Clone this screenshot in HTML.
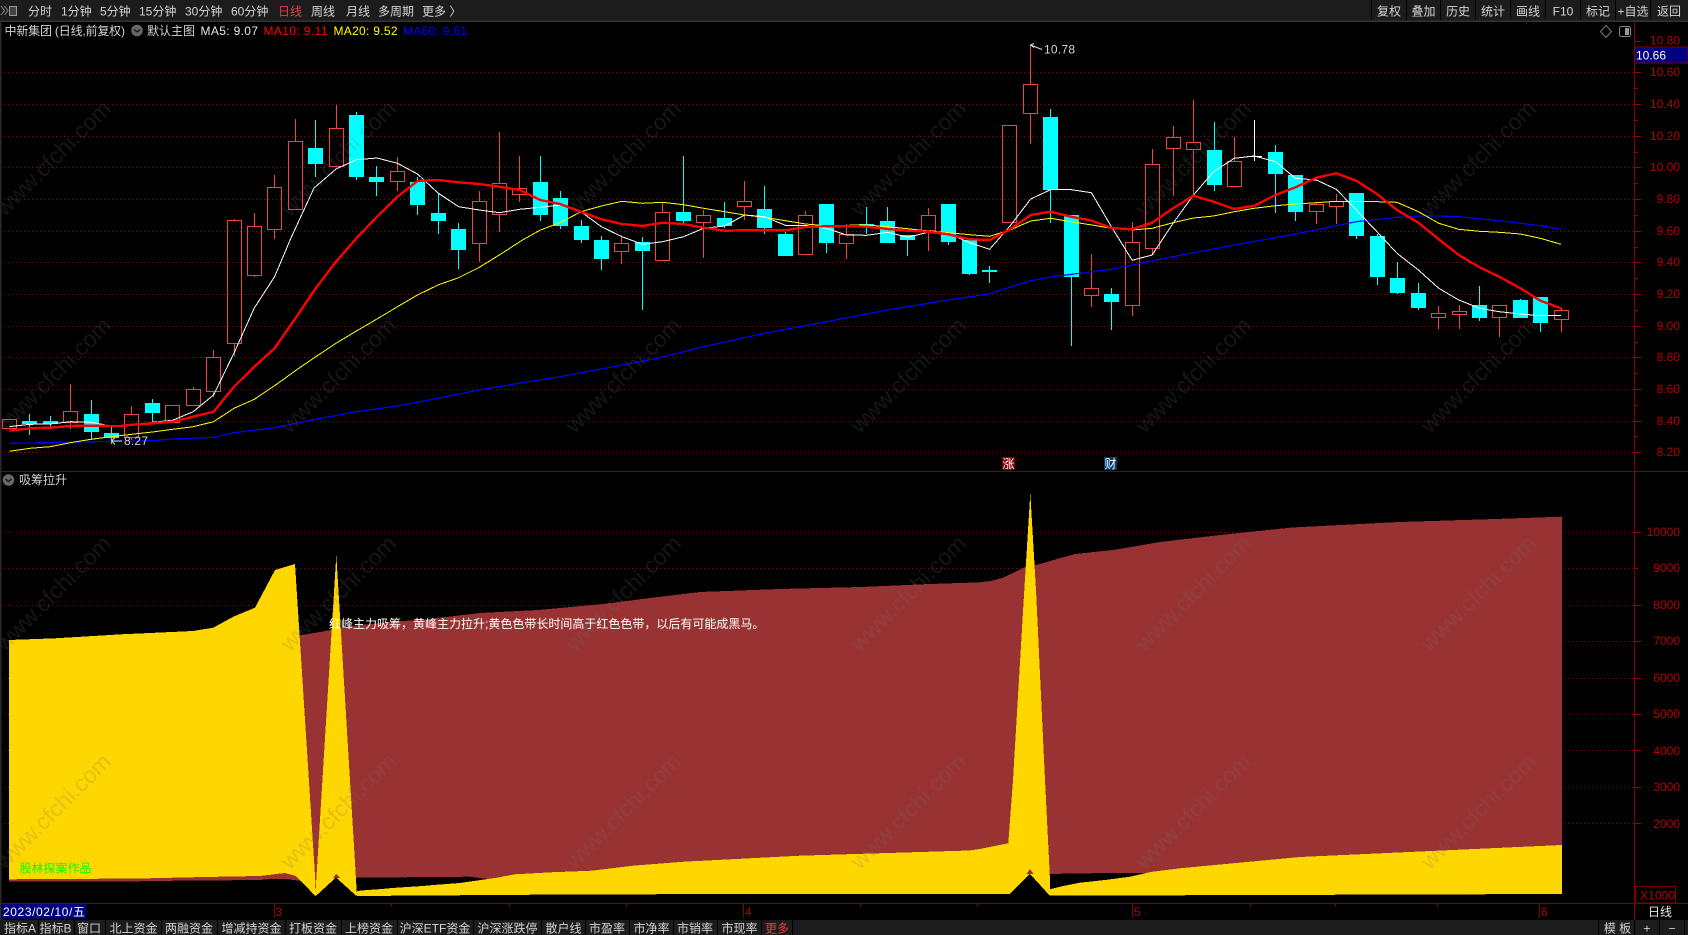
<!DOCTYPE html>
<html lang="zh"><head><meta charset="utf-8"><title>中新集团</title>
<style>
html,body{margin:0;padding:0;background:#000;width:1688px;height:935px;overflow:hidden}
svg{display:block}
text{font-family:"Liberation Sans","Noto Sans CJK SC",sans-serif;font-size:12px;fill:#d4d4d4}
.ax text{fill:#b40000;text-anchor:end}
.tb text{text-anchor:middle}
.ln{fill:none;stroke-linejoin:round;shape-rendering:crispEdges}
.wm text{font-size:23px;fill:rgba(110,110,110,.2);text-anchor:middle}
polygon{shape-rendering:crispEdges}
</style></head><body>
<svg xmlns="http://www.w3.org/2000/svg" width="1688" height="935" viewBox="0 0 1688 935">
<rect width="1688" height="935" fill="#000"/>
<!-- grid -->
<path shape-rendering="crispEdges" stroke="#a00000" stroke-dasharray="1 3" fill="none" d="M4 72.5H1634M4 104.5H1634M4 136.5H1634M4 167.5H1634M4 199.5H1634M4 231.5H1634M4 262.5H1634M4 294.5H1634M4 326.5H1634M4 357.5H1634M4 389.5H1634M4 421.5H1634M4 452.5H1634M4 532.5H1634M4 568.5H1634M4 605.5H1634M4 641.5H1634M4 678.5H1634M4 714.5H1634M4 750.5H1634M4 787.5H1634M4 823.5H1634"/>
<!-- red wicks/bodies -->
<g shape-rendering="crispEdges" stroke="#f04444" fill="none">
<path d="M70.5 384V411M70.5 422V429M131.5 406V414M131.5 437V440M193.5 387V389M213.5 350V357M213.5 391V397M234.5 219V220M234.5 343V356M254.5 213V226M254.5 275V277M274.5 175V187M274.5 229V239M295.5 119V141M336.5 105V128M397.5 157V171M397.5 181V191M479.5 191V201M479.5 243V262M499.5 132V183M499.5 214V232M519.5 156V188M519.5 194V202M621.5 235V243M621.5 251V264M662.5 202V212M703.5 210V215M703.5 222V258M744.5 181V201M744.5 206V220M805.5 211V215M846.5 224V234M846.5 243V259M928.5 208V215M928.5 230V251M1030.5 45V84M1030.5 113V144M1091.5 254V288M1091.5 295V307M1132.5 222V242M1132.5 305V316M1152.5 149V164M1152.5 248V255M1173.5 126V137M1173.5 148V196M1193.5 100V142M1193.5 149V197M1234.5 137V161M1316.5 203V204M1316.5 211V224M1336.5 194V201M1336.5 206V224M1438.5 306V313M1438.5 317V329M1459.5 305V311M1459.5 314V329M1499.5 317V337M1561.5 308V310M1561.5 319V332"/>
<rect x="2.5" y="419.5" width="14" height="9"/><rect x="63.5" y="411.5" width="14" height="11"/><rect x="124.5" y="414.5" width="14" height="23"/><rect x="165.5" y="405.5" width="14" height="17"/><rect x="186.5" y="389.5" width="14" height="16"/><rect x="206.5" y="357.5" width="14" height="34"/><rect x="227.5" y="220.5" width="14" height="123"/><rect x="247.5" y="226.5" width="14" height="49"/><rect x="267.5" y="187.5" width="14" height="42"/><rect x="288.5" y="141.5" width="14" height="68"/><rect x="329.5" y="128.5" width="14" height="38"/><rect x="390.5" y="171.5" width="14" height="10"/><rect x="472.5" y="201.5" width="14" height="42"/><rect x="492.5" y="183.5" width="14" height="31"/><rect x="512.5" y="188.5" width="14" height="6"/><rect x="614.5" y="243.5" width="14" height="8"/><rect x="655.5" y="212.5" width="14" height="48"/><rect x="696.5" y="215.5" width="14" height="7"/><rect x="737.5" y="201.5" width="14" height="5"/><rect x="798.5" y="215.5" width="14" height="39"/><rect x="839.5" y="234.5" width="14" height="9"/><rect x="921.5" y="215.5" width="14" height="15"/><rect x="1002.5" y="125.5" width="14" height="97"/><rect x="1023.5" y="84.5" width="14" height="29"/><rect x="1084.5" y="288.5" width="14" height="7"/><rect x="1125.5" y="242.5" width="14" height="63"/><rect x="1145.5" y="164.5" width="14" height="84"/><rect x="1166.5" y="137.5" width="14" height="11"/><rect x="1186.5" y="142.5" width="14" height="7"/><rect x="1227.5" y="161.5" width="14" height="25"/><rect x="1309.5" y="204.5" width="14" height="7"/><rect x="1329.5" y="201.5" width="14" height="5"/><rect x="1431.5" y="313.5" width="14" height="4"/><rect x="1452.5" y="311.5" width="14" height="3"/><rect x="1492.5" y="305.5" width="14" height="12"/><rect x="1554.5" y="310.5" width="14" height="9"/>
</g>
<!-- cyan -->
<g shape-rendering="crispEdges">
<path stroke="#00ffff" fill="none" d="M29.5 414V435M50.5 416V427M91.5 400V440M111.5 427V444M152.5 399V422M315.5 120V177M356.5 112V180M376.5 166V196M417.5 177V215M438.5 194V234M458.5 223V269M540.5 156V221M560.5 191V229M581.5 220V243M601.5 236V270M642.5 237V310M683.5 156V223M724.5 202V228M764.5 186V234M785.5 232V256M826.5 204V253M866.5 207V234M887.5 207V243M907.5 235V256M948.5 204V245M969.5 240V275M989.5 266V283M1050.5 109V223M1071.5 215V346M1111.5 288V330M1214.5 122V191M1275.5 145V213M1295.5 175V221M1356.5 193V239M1377.5 234V285M1397.5 262V294M1418.5 283V310M1479.5 286V321M1520.5 299V318M1540.5 297V332"/>
<g fill="#00ffff"><rect x="22" y="421" width="15" height="3"/><rect x="43" y="421" width="15" height="3"/><rect x="84" y="414" width="15" height="18"/><rect x="104" y="433" width="15" height="5"/><rect x="145" y="403" width="15" height="10"/><rect x="308" y="148" width="15" height="16"/><rect x="349" y="115" width="15" height="62"/><rect x="369" y="177" width="15" height="5"/><rect x="410" y="182" width="15" height="23"/><rect x="431" y="213" width="15" height="8"/><rect x="451" y="229" width="15" height="21"/><rect x="533" y="182" width="15" height="33"/><rect x="553" y="198" width="15" height="28"/><rect x="574" y="226" width="15" height="14"/><rect x="594" y="240" width="15" height="19"/><rect x="635" y="242" width="15" height="9"/><rect x="676" y="212" width="15" height="9"/><rect x="717" y="218" width="15" height="8"/><rect x="757" y="209" width="15" height="19"/><rect x="778" y="234" width="15" height="22"/><rect x="819" y="204" width="15" height="39"/><rect x="859" y="224" width="15" height="2"/><rect x="880" y="221" width="15" height="22"/><rect x="900" y="235" width="15" height="5"/><rect x="941" y="204" width="15" height="38"/><rect x="962" y="240" width="15" height="34"/><rect x="982" y="270" width="15" height="2"/><rect x="1043" y="117" width="15" height="73"/><rect x="1064" y="215" width="15" height="62"/><rect x="1104" y="294" width="15" height="8"/><rect x="1207" y="150" width="15" height="35"/><rect x="1268" y="152" width="15" height="22"/><rect x="1288" y="175" width="15" height="37"/><rect x="1349" y="193" width="15" height="43"/><rect x="1370" y="236" width="15" height="41"/><rect x="1390" y="278" width="15" height="15"/><rect x="1411" y="293" width="15" height="15"/><rect x="1472" y="305" width="15" height="13"/><rect x="1513" y="300" width="15" height="18"/><rect x="1533" y="297" width="15" height="26"/></g>
<path stroke="#fff" fill="none" d="M1254.5 120V161M1247 156.5H1262"/>
</g>
<!-- MA lines -->
<polyline class="ln" stroke="#0000ff" stroke-width="1.2" points="9.3,443.3 70.4,442.3 111.4,441.3 152.5,440.7 172.5,439 193.2,438.3 213.6,437.3 234,432.7 274.6,427.7 315.7,419.3 356.4,411.7 397.5,406 438,398.3 479.3,390 522.5,382.7 560,376.7 652.9,359.3 703.6,346.7 764.6,333.3 826.4,321.7 887.5,310 948.6,300 989.6,293.7 1030.7,280.7 1050.6,277 1111.4,269.3 1173,256.7 1234.3,245 1295.5,234 1356.3,221.7 1397,217.3 1428.6,215.7 1458.8,216.7 1499.2,220.7 1540.4,225.7 1561,229.3"/>
<polyline class="ln" stroke="#ffff00" stroke-width="1" points="9.3,451.3 30,448.3 50,446.7 70.4,442.7 91,439.3 111.4,436.7 131.8,434.3 152.5,432 172.5,429.3 193.2,426.7 213.6,421.7 234,408.3 254.3,399.3 274.6,385.7 295.4,370.7 315.7,356.7 336,343.3 356.4,331 377,319 397.5,306.7 417.5,295 438,285 458.6,277.7 479.3,267.3 499.3,255 522.5,240 540.4,230 560,222.7 581,211.7 601.4,206 622,201.3 642.5,203.3 662.5,202.3 683.6,204.7 703.6,208.3 724.6,211.7 744.6,215 764.6,217.3 785.4,220.7 805.4,224 826.4,225.7 846.4,225.3 866.8,225 887.5,226.7 907.5,228.7 928,231 948.6,232.7 969.6,234.7 989.6,236.3 1010,230 1030.7,221 1050.7,218.3 1070.7,221.7 1092,225 1111.4,228.3 1132.2,230 1152.2,228.3 1173,222.7 1193.5,218 1213.5,216 1234.3,211.7 1254.3,208.3 1275.5,205.7 1295.5,204 1316.3,202.7 1336.3,201.3 1356.3,201.3 1377,201.7 1397,202.3 1418.4,211.7 1438.8,223.3 1458.8,229.3 1479.6,231.3 1499.2,232.3 1520.4,234 1540.4,238.3 1561,244.3"/>
<polyline class="ln" stroke="#ffffff" stroke-width="1" points="9.3,426.7 30,424.3 50,424 70.4,421.7 91,422.3 111.4,426 131.8,425.3 152.5,422.3 172.5,420.3 193.2,411.7 213.6,395 234,353 254.3,308 274.6,276.7 291,238 314,188 336,169 356.4,159.7 377,158 397.5,163.3 417.5,174 438,193 458.6,206.7 479.3,210 499.3,212.7 519.6,209.3 540.4,207.3 560.7,205 581,211.7 601.4,226.7 622,236.7 642.5,244.3 662.5,241.7 683.6,236.7 703.6,228.3 724.6,226 744.6,215 764.6,216.7 785.4,225.3 805.4,225.3 826.4,228.3 846.4,235 866.8,235.3 887.5,232.3 907.5,237.3 928,232.3 948.6,233.3 969.6,242.7 989.6,249.3 1010,226 1030.7,199 1050.6,189.7 1071.4,189.7 1091.4,192.7 1111.4,226.7 1132.2,260.3 1152.2,255 1173,223.3 1193.5,195 1213.5,171.7 1234.3,158.3 1254.3,156 1275.5,161.7 1295.5,178.3 1316.3,180 1336.3,189.3 1356.3,210 1377,231.7 1397,253.3 1418.4,270 1438.8,288.3 1458.8,300 1479.6,308.3 1499.2,311.7 1520.4,314 1540.4,315.7 1561,315.7"/>
<polyline class="ln" stroke="#ff0000" stroke-width="2.4" points="9.3,430.7 30,428.3 50,427.7 70.4,426 91,425.7 111.4,426 122,426 131.8,424.7 152.5,423.3 172.5,421.7 193.2,416.7 213.6,411.7 234,386.7 254.3,366.7 274.6,348.3 295.4,318.3 315.7,288.3 336,261.7 356.4,238.3 377,216.7 397.5,196.7 417.5,181 438,180 458.6,182.3 479.3,184 499.3,186.7 519.6,190 540.4,200 560,204 581,211.7 601.4,219.3 622,224 642.5,226 662.5,222.7 683.6,224 703.6,227.7 724.6,230.7 744.6,230.3 764.6,230.3 785.4,230.3 805.4,227 826.4,226.3 846.4,226 866.8,226.7 887.5,229 907.5,230.7 928,231.7 948.6,234.3 969.6,239.3 989.6,240 1010,229.3 1030.7,215 1050.7,211.7 1070.7,216.7 1092,220.7 1111.4,228 1132.2,229.3 1152.2,222.7 1173,208.3 1193.5,195.7 1213.5,201.7 1234.3,209 1254.3,205.7 1275.5,195 1295.5,187.3 1316.3,177.7 1336.3,173.3 1356.3,180.7 1377,194 1397,210 1418.4,222.7 1438.8,239.3 1458.8,255 1479.6,267.3 1499.2,276.7 1520.4,288.3 1540.4,300.7 1561,308.3"/>
<!-- lower panel -->
<polygon fill="#993333" points="296,636 320,632 352,626 390,622 430,619 480,613 538,610 603,604 650,598 700,592 780,589 861,587 930,584 960,583 979,582.3 991,581 1003,577.7 1015,572 1023,568 1040,564 1057,559 1075,554 1097,551.7 1115,549.7 1135,546.3 1160,542 1220,535 1292,527.5 1399,522 1480,519.5 1562,516.7 1562,850 1153,873 1081,873.3 1050,874 1030,870 1000,880 497,880 469,876.7 357,877.7 315.3,884"/>
<polygon fill="#993333" points="9,879 285,871 297,871 302,881 285,879 270,879 260,880 204,880.5 141,881 141,881.7 9,881.7"/>
<g fill="#ffd700">
<polygon points="9,640 55,638.3 121.7,634.3 193,631 213.3,627.7 233.3,616.7 255,607.7 275,570 295,564 315.3,880 315.3,896 296,876 285,873 260,876 204,877 140,878.5 9,879.3"/>
<polygon points="336.3,555 315.3,895.7 357,895.7"/>
<polygon points="357,891 367,890 382,889 392,888 407,887 423,886 433,885 443,884.3 460,883 497,877.7 515,874.3 551,872.3 592,870.7 633,865.7 684,861.7 800,855.7 969,850.5 980,849 1008.3,843.3 1010,894 592,894.3 357,896"/>
<polygon points="1030.3,493 1024.3,590 1013,780 1008.3,843.3 1008,894 1050,896 1050,880 1045,780 1036,590"/>
<polygon points="1050,889.3 1060,886.7 1080,882.7 1105,880 1130,876.7 1145,873.3 1153,871.7 1180,868.3 1300,857 1562,845 1562,894 1050,895.7"/>
</g>
<polygon fill="#000" points="315.3,896.5 336,877.5 357,896.5"/>
<polygon fill="#993333" points="333,878 336,874 340,878"/>
<polygon fill="#000" points="1009,894.5 1030,874 1051,897 1009,897"/>
<polygon fill="#993333" points="1026.5,874 1030,869 1033.5,874"/>
<!-- watermark -->
<g class="wm">
<text x="53" y="166" transform="rotate(-45 53 158)">www.cfchi.com</text><text x="338" y="166" transform="rotate(-45 338 158)">www.cfchi.com</text><text x="623" y="166" transform="rotate(-45 623 158)">www.cfchi.com</text><text x="908" y="166" transform="rotate(-45 908 158)">www.cfchi.com</text><text x="1193" y="166" transform="rotate(-45 1193 158)">www.cfchi.com</text><text x="1478" y="166" transform="rotate(-45 1478 158)">www.cfchi.com</text>
<text x="53" y="383" transform="rotate(-45 53 375)">www.cfchi.com</text><text x="338" y="383" transform="rotate(-45 338 375)">www.cfchi.com</text><text x="623" y="383" transform="rotate(-45 623 375)">www.cfchi.com</text><text x="908" y="383" transform="rotate(-45 908 375)">www.cfchi.com</text><text x="1193" y="383" transform="rotate(-45 1193 375)">www.cfchi.com</text><text x="1478" y="383" transform="rotate(-45 1478 375)">www.cfchi.com</text>
<text x="53" y="601" transform="rotate(-45 53 593)">www.cfchi.com</text><text x="338" y="601" transform="rotate(-45 338 593)">www.cfchi.com</text><text x="623" y="601" transform="rotate(-45 623 593)">www.cfchi.com</text><text x="908" y="601" transform="rotate(-45 908 593)">www.cfchi.com</text><text x="1193" y="601" transform="rotate(-45 1193 593)">www.cfchi.com</text><text x="1478" y="601" transform="rotate(-45 1478 593)">www.cfchi.com</text>
<text x="53" y="819" transform="rotate(-45 53 811)">www.cfchi.com</text><text x="338" y="819" transform="rotate(-45 338 811)">www.cfchi.com</text><text x="623" y="819" transform="rotate(-45 623 811)">www.cfchi.com</text><text x="908" y="819" transform="rotate(-45 908 811)">www.cfchi.com</text><text x="1193" y="819" transform="rotate(-45 1193 811)">www.cfchi.com</text><text x="1478" y="819" transform="rotate(-45 1478 811)">www.cfchi.com</text>
</g>
<!-- chart annotations -->
<text x="329" y="628" style="fill:#fff">红峰主力吸筹，黄峰主力拉升;黄色色带长时间高于红色色带，以后有可能成黑马。</text>
<text x="19.5" y="872.5" style="fill:#00ff00">股林探案作品</text>
<text x="1044" y="53.5" textLength="31">10.78</text>
<path fill="none" stroke="#ddd" d="M1042 49.5L1030.5 45M1034 43.5L1030.5 45L1034 47.5"/>
<text x="124" y="445" textLength="24">8.27</text>
<path fill="none" stroke="#ddd" d="M122 441H111.5M115 437.5L111.5 441L115 444.5"/>
<rect x="1002" y="457" width="13" height="13" fill="#800000"/><text x="1002.5" y="468" style="fill:#fff">涨</text>
<rect x="1104" y="457" width="13" height="13" fill="#003a6e"/><text x="1104.5" y="468" style="fill:#fff">财</text>
<!-- dividers & axis -->
<g shape-rendering="crispEdges">
<rect x="0" y="471" width="1688" height="1" fill="#800000"/>
<rect x="0" y="903" width="1688" height="1" fill="#800000"/>
<rect x="1634" y="22" width="1" height="898" fill="#800000"/>
<rect x="0" y="22" width="1.5" height="898" fill="#2a2a2a"/>
<path stroke="#a00000" d="M1635 41.5h6M1635 72.5h6M1635 88.5h3M1635 104.5h6M1635 120.5h3M1635 136.5h6M1635 152.5h3M1635 167.5h6M1635 183.5h3M1635 199.5h6M1635 215.5h3M1635 231.5h6M1635 247.5h3M1635 262.5h6M1635 278.5h3M1635 294.5h6M1635 310.5h3M1635 326.5h6M1635 342.5h3M1635 357.5h6M1635 373.5h3M1635 389.5h6M1635 405.5h3M1635 421.5h6M1635 436.5h3M1635 452.5h6M1635 532.5h6M1635 568.5h3M1635 605.5h6M1635 641.5h6M1635 678.5h6M1635 714.5h6M1635 750.5h6M1635 787.5h6M1635 823.5h6"/>
<path stroke="#800000" d="M274.5 904V918M743.5 904V918M1132.5 904V918M1539.5 904V918M391.5 904v3M509.5 904v3M626.5 904v3M860.5 904v3M977.5 904v3M1250.5 904v3M1335.5 904v3M1437.5 904v3"/>
</g>
<g class="ax">
<text x="1680" y="44.5">10.80</text><text x="1680" y="76">10.60</text><text x="1680" y="108">10.40</text><text x="1680" y="140">10.20</text><text x="1680" y="171">10.00</text><text x="1680" y="203">9.80</text><text x="1680" y="235">9.60</text><text x="1680" y="266">9.40</text><text x="1680" y="298">9.20</text><text x="1680" y="330">9.00</text><text x="1680" y="361">8.80</text><text x="1680" y="393">8.60</text><text x="1680" y="425">8.40</text><text x="1680" y="456">8.20</text>
<text x="1680" y="536">10000</text><text x="1680" y="572">9000</text><text x="1680" y="609">8000</text><text x="1680" y="645">7000</text><text x="1680" y="682">6000</text><text x="1680" y="718">5000</text><text x="1680" y="755">4000</text><text x="1680" y="791">3000</text><text x="1680" y="828">2000</text>
<text x="1675" y="899.5">X1000</text>
</g>
<rect x="1635.5" y="886.5" width="40" height="16.5" fill="none" stroke="#800000"/>
<rect x="1635" y="47" width="53" height="16" fill="#000080" stroke="#800000"/>
<text x="1636" y="59.5" style="fill:#fff">10.66</text>
<path d="M1606 25.5L1611.5 31.5L1606 37.5L1600.5 31.5Z" fill="none" stroke="#777"/>
<rect x="1619.5" y="26.5" width="11" height="10" rx="2" fill="none" stroke="#888"/><rect x="1625" y="28" width="4" height="7" fill="#999"/>
<!-- x labels -->
<rect x="2" y="904" width="84" height="14.5" fill="#000080"/>
<text x="3" y="916" textLength="82" style="fill:#fff">2023/02/10/五</text>
<text x="275.5" y="916" style="fill:#b40000">3</text><text x="745" y="916" style="fill:#b40000">4</text><text x="1134" y="916" style="fill:#b40000">5</text><text x="1541" y="916" style="fill:#b40000">6</text>
<text x="1648" y="916" style="fill:#e8e8e8">日线</text>
<!-- info line -->
<text x="4.5" y="35" textLength="120.5">中新集团 (日线,前复权)</text>
<circle cx="137" cy="30.5" r="5.8" fill="#666"/><path d="M134 29.5l3 2.5 3-2.5" fill="none" stroke="#111" stroke-width="1.2"/>
<text x="147" y="35">默认主图</text>
<text x="200.5" y="35" textLength="57.5" style="fill:#e8e8e8">MA5: 9.07</text>
<text x="263.5" y="35" textLength="64" style="fill:#ff0000">MA10: 9.11</text>
<text x="333.5" y="35" textLength="64" style="fill:#ffff00">MA20: 9.52</text>
<text x="403" y="35" textLength="64" style="fill:#0000ff">MA60: 9.61</text>
<circle cx="8.5" cy="480" r="5.8" fill="#666"/><path d="M5.5 479l3 2.500 3-2.500" fill="none" stroke="#111" stroke-width="1.2"/>
<text x="19" y="484">吸筹拉升</text>
<!-- top toolbar -->
<rect x="0" y="0" width="1688" height="20.5" fill="#1c1c1c"/>
<rect x="0" y="20.5" width="1688" height="1.5" fill="#333"/>
<path d="M1 6l3.500 4.500L1 15M4.500 6l3.500 4.500L4.500 15" fill="none" stroke="#888"/>
<rect x="9.5" y="6.500" width="7" height="9" fill="#444" stroke="#999"/>
<text x="28" y="15.500">分时</text><text x="61" y="15.500">1分钟</text><text x="100" y="15.500">5分钟</text><text x="139" y="15.500">15分钟</text><text x="185" y="15.500">30分钟</text><text x="231" y="15.500">60分钟</text><text x="278" y="15.500" style="fill:#e04040">日线</text><text x="311" y="15.500">周线</text><text x="346" y="15.500">月线</text><text x="378" y="15.500">多周期</text><text x="422" y="15.500">更多 〉</text>
<path shape-rendering="crispEdges" stroke="#000" d="M1371.5 0V20M1406.5 0V20M1440.5 0V20M1475.5 0V20M1510.5 0V20M1545.5 0V20M1580.5 0V20M1615.5 0V20M1650.5 0V20"/>
<g class="tb"><text x="1389" y="15.500">复权</text><text x="1423.5" y="15.500">叠加</text><text x="1458" y="15.500">历史</text><text x="1493" y="15.500">统计</text><text x="1528" y="15.500">画线</text><text x="1563" y="15.500">F10</text><text x="1598" y="15.500">标记</text><text x="1633" y="15.500">+自选</text><text x="1669" y="15.500">返回</text></g>
<!-- bottom toolbar -->
<rect x="0" y="920" width="1688" height="15" fill="#1c1c1c"/>
<path shape-rendering="crispEdges" stroke="#000" d="M38.500 920V935M74.500 920V935M105.500 920V935M161.500 920V935M217.500 920V935M285.500 920V935M341.500 920V935M397.500 920V935M473.500 920V935M541.500 920V935M585.500 920V935M629.500 920V935M673.500 920V935M717.500 920V935M761.500 920V935M792.500 920V935M1598.500 920V935M1634.500 920V935M1659.500 920V935M1684.500 920V935"/>
<g class="tb">
<text x="20" y="932.5">指标A</text><text x="55.5" y="932.5">指标B</text><text x="89" y="932.5">窗口</text><text x="133.5" y="932.5">北上资金</text><text x="189" y="932.5">两融资金</text><text x="251.5" y="932.5">增减持资金</text><text x="313" y="932.5">打板资金</text><text x="369" y="932.5">上榜资金</text><text x="435" y="932.5">沪深ETF资金</text><text x="507.5" y="932.5">沪深涨跌停</text><text x="563.5" y="932.5">散户线</text><text x="607" y="932.5">市盈率</text><text x="651.5" y="932.5">市净率</text><text x="695" y="932.5">市销率</text><text x="739.5" y="932.5">市现率</text><text x="777" y="932.5" style="fill:#e04040">更多</text>
<text x="1617.5" y="932.5">模 板</text><text x="1647" y="932.5">+</text><text x="1672" y="932.5">−</text>
</g>
</svg>
</body></html>
